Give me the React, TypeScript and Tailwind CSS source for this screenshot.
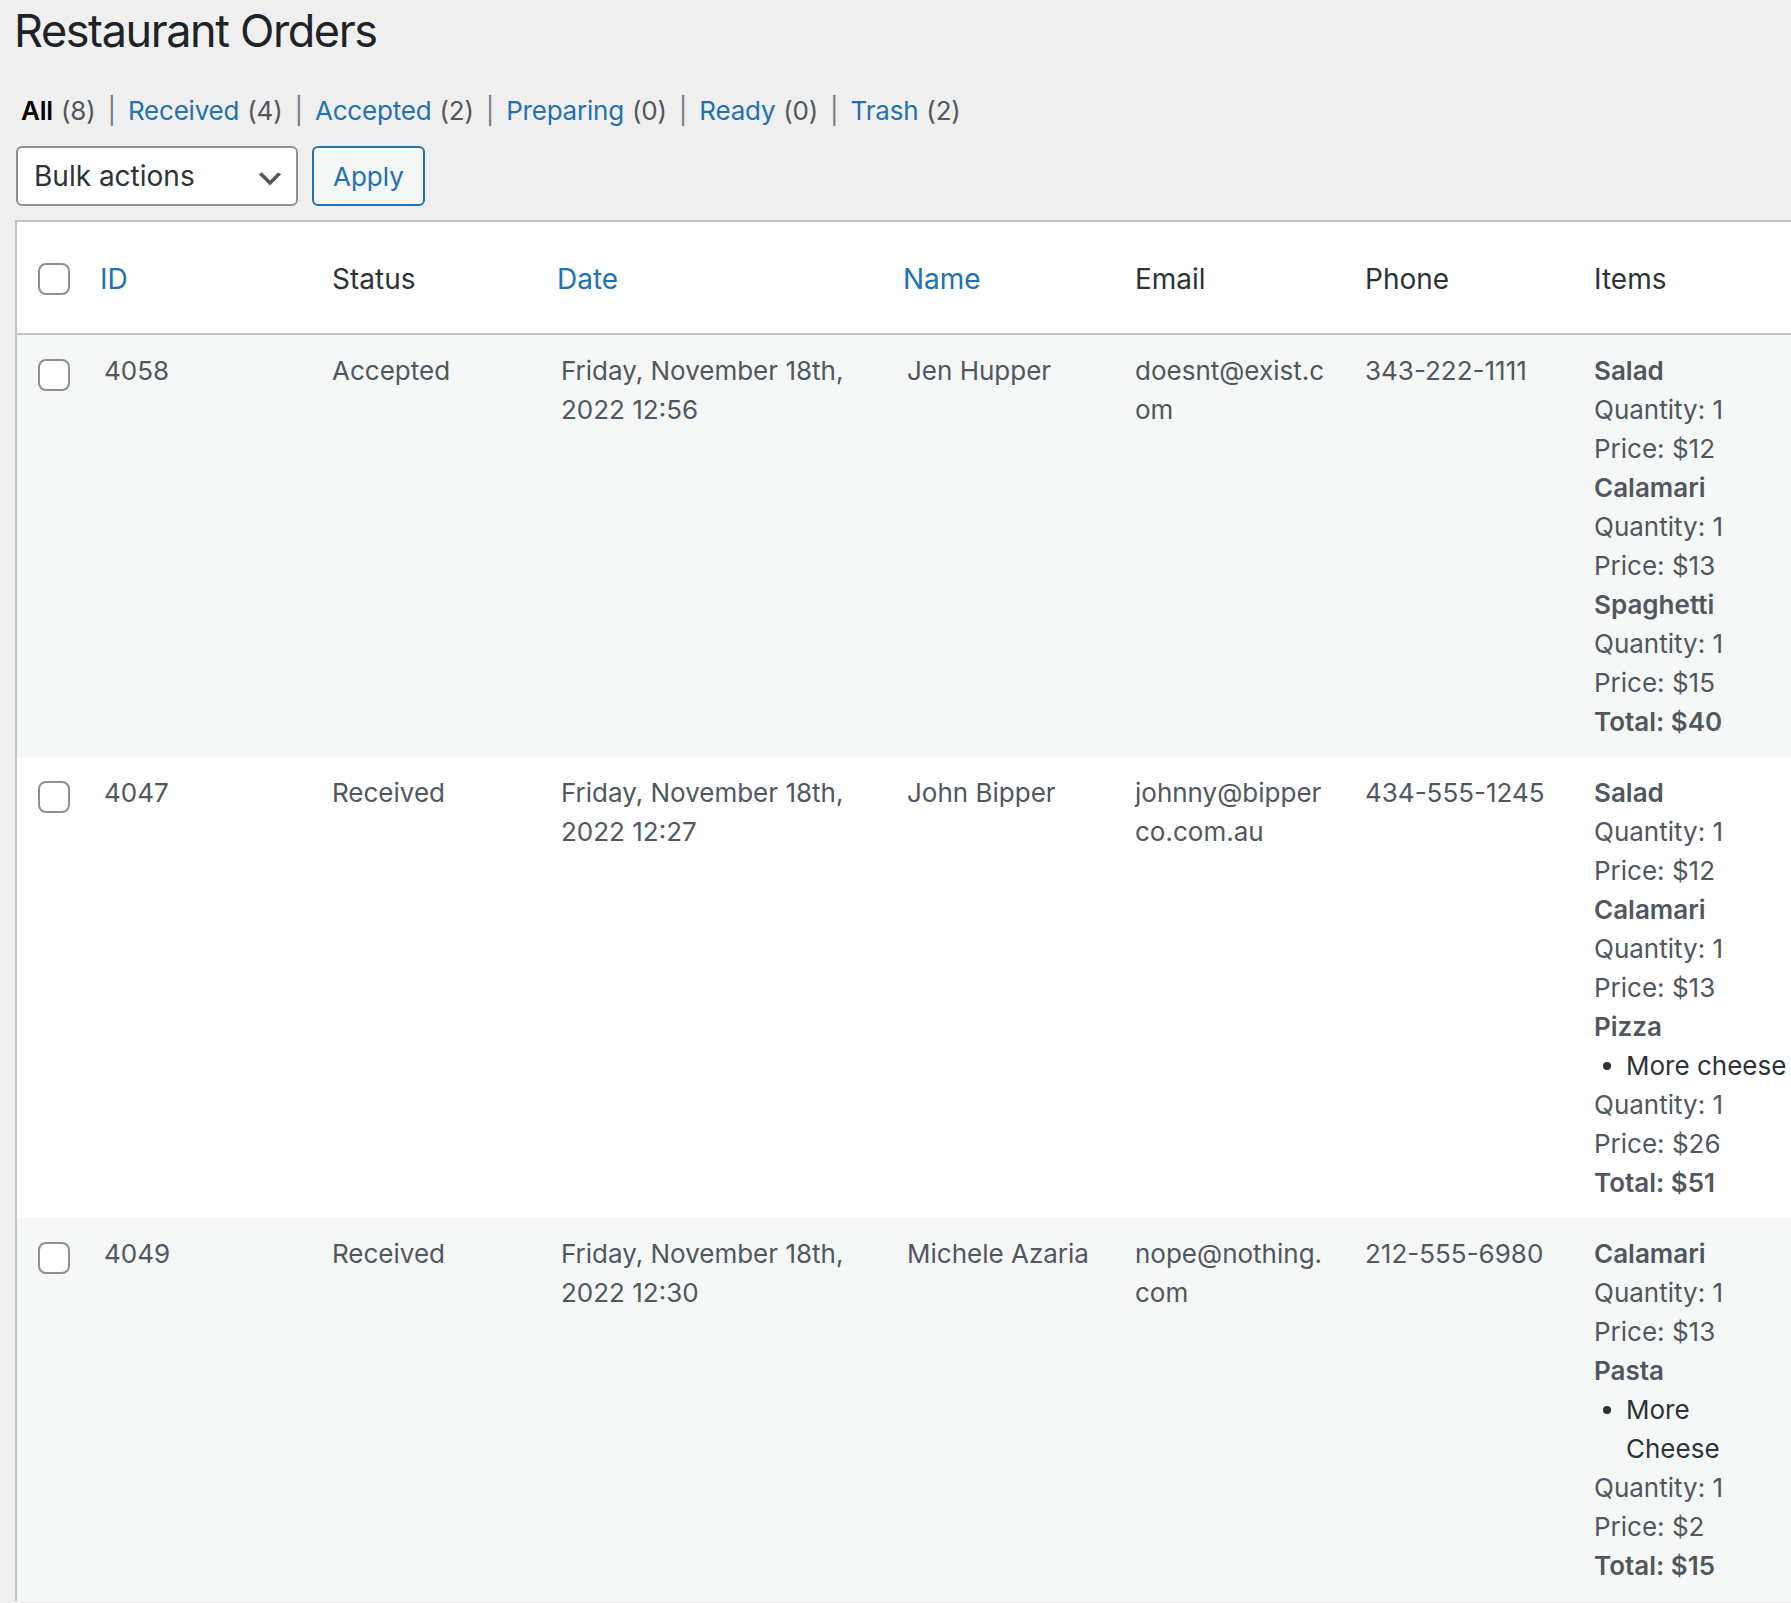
import React from "react";

type Item = { name: string; options?: string[][]; qty: number; price: string };
type Order = {
  id: string;
  status: string;
  date: string[];
  name: string;
  email: string[];
  phone: string;
  items: Item[];
  total: string;
  striped: boolean;
};

const orders: Order[] = [
  {
    id: "4058",
    status: "Accepted",
    date: ["Friday, November 18th,", "2022 12:56"],
    name: "Jen Hupper",
    email: ["doesnt@exist.c", "om"],
    phone: "343-222-1111",
    items: [
      { name: "Salad", qty: 1, price: "$12" },
      { name: "Calamari", qty: 1, price: "$13" },
      { name: "Spaghetti", qty: 1, price: "$15" },
    ],
    total: "$40",
    striped: true,
  },
  {
    id: "4047",
    status: "Received",
    date: ["Friday, November 18th,", "2022 12:27"],
    name: "John Bipper",
    email: ["johnny@bipper", "co.com.au"],
    phone: "434-555-1245",
    items: [
      { name: "Salad", qty: 1, price: "$12" },
      { name: "Calamari", qty: 1, price: "$13" },
      { name: "Pizza", options: [["More cheese"]], qty: 1, price: "$26" },
    ],
    total: "$51",
    striped: false,
  },
  {
    id: "4049",
    status: "Received",
    date: ["Friday, November 18th,", "2022 12:30"],
    name: "Michele Azaria",
    email: ["nope@nothing.", "com"],
    phone: "212-555-6980",
    items: [
      { name: "Calamari", qty: 1, price: "$13" },
      { name: "Pasta", options: [["More", "Cheese"]], qty: 1, price: "$2" },
    ],
    total: "$15",
    striped: true,
  },
];

function Checkbox() {
  return (
    <span className="block w-[32px] h-[32px] rounded-[8px] border-2 border-[#8c8f94] bg-white" />
  );
}

function Lines({ lines }: { lines: string[] }) {
  return (
    <>
      {lines.map((l, i) => (
        <div key={i} className="whitespace-nowrap">
          {l}
        </div>
      ))}
    </>
  );
}

const GRID = "grid grid-cols-[67px_228px_229px_346px_228px_230px_229px_229px]";

function NavItem({
  label,
  count,
  current,
  last,
}: {
  label: string;
  count: string;
  current?: boolean;
  last?: boolean;
}) {
  return (
    <li className="flex items-center whitespace-nowrap">
      <span className={current ? "font-semibold text-black" : "text-[#2271b1]"}>{label}</span>
      <span className="ml-[8px] text-[#50575e]">({count})</span>
      {!last && <span className="mx-[12px] text-[#787c82]">|</span>}
    </li>
  );
}

export default function App() {
  return (
    <div className="min-h-screen w-full overflow-hidden bg-[#f0f0f1] font-['Inter',sans-serif] text-[#3c434a]">
      <div className="pl-[14px] pt-[1px]">
        <h1 className="text-[45px] leading-[60px] font-normal text-[#1d2327] tracking-[-1.4px]">
          Restaurant Orders
        </h1>
        <ul className="mt-[24px] flex h-[52px] items-center pl-[7px] text-[26px] leading-[52px] tracking-[-0.2px]">
          <NavItem label="All" count="8" current />
          <NavItem label="Received" count="4" />
          <NavItem label="Accepted" count="2" />
          <NavItem label="Preparing" count="0" />
          <NavItem label="Ready" count="0" />
          <NavItem label="Trash" count="2" last />
        </ul>
        <div className="mt-[9px] flex items-center gap-[14px] pl-[2px]">
          <div className="relative flex h-[60px] w-[282px] items-center rounded-[6px] border-2 border-[#8c8f94] bg-white pl-[16px] text-[28px] text-[#2c3338]">
            Bulk actions
            <svg
              className="absolute right-[10px] top-[15px]"
              width="32"
              height="32"
              viewBox="0 0 20 20"
            >
              <path d="M5 6l5 5 5-5 2 1-7 7-7-7 2-1z" fill="#50575e" />
            </svg>
          </div>
          <div className="flex h-[60px] items-center rounded-[6px] border-2 border-[#2271b1] bg-[#f6f7f7] px-[19px] text-[26px] text-[#2271b1]">
            Apply
          </div>
        </div>
      </div>

      <div className="ml-[15px] mt-[14px] w-max border-t-2 border-l-2 border-[#c3c4c7] bg-white">
        {/* Header */}
        <div className={`${GRID} h-[113px] items-center border-b-2 border-[#c3c4c7] pt-[2px] text-[28px] leading-[36px] text-[#2c3338]`}>
          <div className="pl-[21px]">
            <Checkbox />
          </div>
          <div className="pl-[16px] text-[#2271b1]">ID</div>
          <div className="pl-[20px]">Status</div>
          <div className="pl-[16px] text-[#2271b1]">Date</div>
          <div className="pl-[16px] text-[#2271b1]">Name</div>
          <div className="pl-[20px]">Email</div>
          <div className="pl-[20px]">Phone</div>
          <div className="pl-[20px]">Items</div>
        </div>

        {orders.map((o) => (
          <div
            key={o.id}
            className={`${GRID} items-start pb-[16px] pt-[16px] text-[26px] leading-[39px] text-[#50575e] ${
              o.striped ? "bg-[#f6f7f7]" : "bg-white"
            }`}
          >
            <div className="pl-[21px] pt-[8px]">
              <Checkbox />
            </div>
            <div className="pl-[20px]">{o.id}</div>
            <div className="pl-[20px]">{o.status}</div>
            <div className="pl-[20px]">
              <Lines lines={o.date} />
            </div>
            <div className="pl-[20px] whitespace-nowrap">{o.name}</div>
            <div className="pl-[20px]">
              <Lines lines={o.email} />
            </div>
            <div className="pl-[20px]">{o.phone}</div>
            <div className="pl-[20px]">
              {o.items.map((it) => (
                <div key={it.name}>
                  <div className="font-semibold">{it.name}</div>
                  {it.options &&
                    it.options.map((opt, i) => (
                      <div key={i} className="flex items-start text-[#2c3338]">
                        <span className="ml-[9px] mt-[16px] h-[8px] w-[8px] shrink-0 rounded-full bg-[#2c3338]" />
                        <div className="ml-[15px]">
                          <Lines lines={opt} />
                        </div>
                      </div>
                    ))}
                  <div className="whitespace-nowrap">Quantity: {it.qty}</div>
                  <div className="whitespace-nowrap">Price: {it.price}</div>
                </div>
              ))}
              <div className="font-semibold whitespace-nowrap">Total: {o.total}</div>
            </div>
          </div>
        ))}
      </div>
    </div>
  );
}
